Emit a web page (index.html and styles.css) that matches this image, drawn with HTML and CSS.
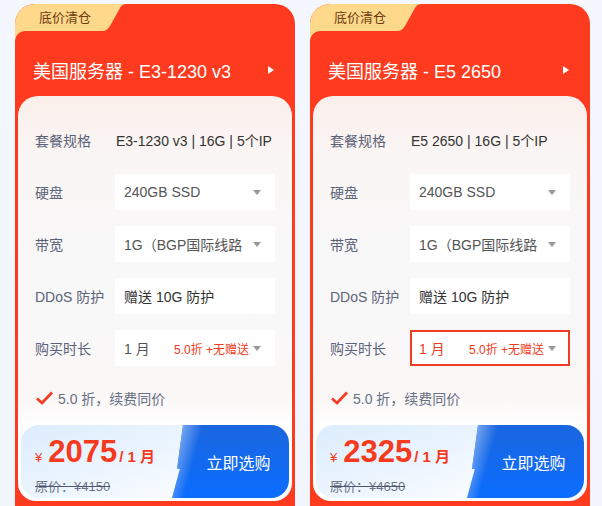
FILE: index.html
```html
<!DOCTYPE html>
<html lang="zh-CN">
<head>
  <meta charset="UTF-8">
  <meta name="viewport" content="width=device-width, initial-scale=1.0">
  <title>美国服务器</title>
  <link rel="stylesheet" href="styles.css">
</head>
<body>
  <div class="card">
    <div class="tag">
      <svg width="112" height="38" viewBox="0 0 112 38"><path d="M0 0 H112 C108 0 106 2 105 4 L95 22 C93 25 91 27 87 27 H10 A10 10 0 0 0 0 37 Z" fill="#fed88b"/></svg>
      <span class="tag-text">底价清仓</span>
    </div>
    <div class="card-head">
      <span class="title">美国服务器 - E3-1230 v3</span>
      <span class="head-arrow"></span>
    </div>
    <div class="panel">
      <div class="row">
        <span class="label">套餐规格</span>
        <span class="plain">E3-1230 v3 | 16G | 5个IP</span>
      </div>
      <div class="row">
        <span class="label">硬盘</span>
        <div class="select"><span class="val">240GB SSD</span><span class="caret"></span></div>
      </div>
      <div class="row">
        <span class="label">带宽</span>
        <div class="select"><span class="val">1G（BGP国际线路）</span><span class="caret"></span></div>
      </div>
      <div class="row">
        <span class="label">DDoS 防护</span>
        <div class="select"><span class="val dark">赠送 10G 防护</span></div>
      </div>
      <div class="row">
        <span class="label">购买时长</span>
        <div class="select"><span class="val fixed">1 月</span><span class="note">5.0折 +无赠送</span><span class="caret near"></span></div>
      </div>
      <div class="check">
        <svg width="17" height="14" viewBox="0 0 17 14"><path d="M1 7.5 L6 12 L16 1.5" fill="none" stroke="#f23d24" stroke-width="2.8" stroke-linejoin="round"/></svg>
        <span>5.0 折，续费同价</span>
      </div>
      <div class="buy">
        <div class="price-info">
          <div class="price"><span class="yen">¥</span><span class="num">2075</span><span class="per">/ 1 月</span></div>
          <div class="orig">原价：¥4150</div>
        </div>
        <div class="buy-btn">立即选购</div>
      </div>
    </div>
  </div>

  <div class="card">
    <div class="tag">
      <svg width="112" height="38" viewBox="0 0 112 38"><path d="M0 0 H112 C108 0 106 2 105 4 L95 22 C93 25 91 27 87 27 H10 A10 10 0 0 0 0 37 Z" fill="#fed88b"/></svg>
      <span class="tag-text">底价清仓</span>
    </div>
    <div class="card-head">
      <span class="title">美国服务器 - E5 2650</span>
      <span class="head-arrow"></span>
    </div>
    <div class="panel">
      <div class="row">
        <span class="label">套餐规格</span>
        <span class="plain">E5 2650 | 16G | 5个IP</span>
      </div>
      <div class="row">
        <span class="label">硬盘</span>
        <div class="select"><span class="val">240GB SSD</span><span class="caret"></span></div>
      </div>
      <div class="row">
        <span class="label">带宽</span>
        <div class="select"><span class="val">1G（BGP国际线路）</span><span class="caret"></span></div>
      </div>
      <div class="row">
        <span class="label">DDoS 防护</span>
        <div class="select"><span class="val dark">赠送 10G 防护</span></div>
      </div>
      <div class="row">
        <span class="label">购买时长</span>
        <div class="select active"><span class="val fixed">1 月</span><span class="note">5.0折 +无赠送</span><span class="caret near"></span></div>
      </div>
      <div class="check">
        <svg width="17" height="14" viewBox="0 0 17 14"><path d="M1 7.5 L6 12 L16 1.5" fill="none" stroke="#f23d24" stroke-width="2.8" stroke-linejoin="round"/></svg>
        <span>5.0 折，续费同价</span>
      </div>
      <div class="buy">
        <div class="price-info">
          <div class="price"><span class="yen">¥</span><span class="num">2325</span><span class="per">/ 1 月</span></div>
          <div class="orig">原价：¥4650</div>
        </div>
        <div class="buy-btn">立即选购</div>
      </div>
    </div>
  </div>
</body>
</html>
```

FILE: styles.css
```css
body {
  margin: 0;
  padding: 4px 0 0 15px;
  display: flex;
  gap: 15px;
  background: linear-gradient(180deg, #f4f7fd 0%, #f2f5fb 100%);
  font-family: 'Liberation Sans', 'Noto Sans CJK SC', sans-serif;
  height: 502px;
  overflow: hidden;
}

.card {
  position: relative;
  width: 280px;
  flex: none;
  background: #fe3a1f;
  border-radius: 20px 20px 0 0;
  overflow: hidden;
  padding-bottom: 8px;
}

.tag {
  position: absolute;
  left: 0;
  top: 0;
  width: 112px;
  height: 38px;
}

.tag svg {
  display: block;
}

.tag-text {
  position: absolute;
  left: 24px;
  top: 5px;
  line-height: 18px;
  font-size: 13px;
  color: #6b3a10;
}

.card-head {
  height: 52px;
  padding: 40px 21px 0 18px;
  display: flex;
  align-items: center;
  justify-content: space-between;
}

.title {
  color: #fff;
  font-size: 18px;
}

.head-arrow {
  width: 0;
  height: 0;
  border-top: 4.5px solid transparent;
  border-bottom: 4.5px solid transparent;
  border-left: 6px solid #fff;
}

.panel {
  margin: 0 3px;
  height: 405px;
  box-sizing: border-box;
  padding: 26px 0 3px;
  border-radius: 20px 20px 18px 18px;
  background: linear-gradient(180deg, #fbefeb 0%, #faf6f5 60px, #f8f8f9 180px, #faf7f6 300px, #fff 330px);
  display: flex;
  flex-direction: column;
}

.row {
  display: flex;
  align-items: center;
  height: 36px;
  padding: 0 17px 0 17px;
  margin-bottom: 16px;
  font-size: 14px;
}

.label {
  width: 80px;
  flex: none;
  color: #5b6378;
}

.plain {
  color: #333;
  padding-left: 1px;
}

.select {
  flex: 1;
  height: 36px;
  box-sizing: border-box;
  background: #fff;
  display: flex;
  align-items: center;
  padding: 0 14px 0 9px;
  min-width: 0;
}

.select.active {
  border: 2px solid #f03c22;
  padding: 0 12px 0 7px;
}

.val {
  flex: 1;
  color: #555;
  white-space: nowrap;
  overflow: hidden;
}

.val.dark {
  color: #333;
}

.val.fixed {
  flex: none;
}

.active .val {
  color: #f03c22;
}

.note {
  margin-left: auto;
  font-size: 12px;
  color: #f03c22;
}

.caret {
  flex: none;
  margin-left: 11px;
  width: 0;
  height: 0;
  border-left: 4.5px solid transparent;
  border-right: 4.5px solid transparent;
  border-top: 5px solid #999;
}

.caret.near {
  margin-left: 4px;
}

.check {
  display: flex;
  align-items: center;
  height: 20px;
  margin-top: 6px;
  padding-left: 18px;
  gap: 5px;
  font-size: 14px;
  color: #687085;
}

.check svg {
  display: block;
}

.buy {
  margin: auto 3px 0;
  height: 73px;
  flex: none;
  display: flex;
  border-radius: 18px;
  overflow: hidden;
  background: linear-gradient(160deg, #ddedfd 0%, #eaf4fe 40%, #fbfdff 80%);
}

.price-info {
  flex: 1;
  padding: 10px 0 0 14px;
}

.price {
  line-height: 34px;
  color: #f53a20;
  font-weight: bold;
  white-space: nowrap;
}

.yen {
  font-size: 13px;
  font-weight: normal;
  margin-right: 6px;
}

.num {
  font-size: 31px;
}

.per {
  font-size: 15px;
  margin-left: 2px;
}

.orig {
  margin-top: 4px;
  line-height: 16px;
  font-size: 13px;
  color: #6c7387;
  text-decoration: line-through;
  text-decoration-color: #4d566c;
}

.buy-btn {
  width: 101px;
  flex: none;
  padding-left: 16px;
  display: flex;
  align-items: center;
  justify-content: center;
  color: #fff;
  font-size: 16px;
  clip-path: polygon(11px 0, 100% 0, 100% 100%, 0 100%, 8px 60%, 5px 60%);
  background:
    linear-gradient(105deg, rgba(205, 224, 251, 0.95) 0, rgba(130, 175, 242, 0.8) 12px, rgba(40, 110, 235, 0) 30px),
    linear-gradient(180deg, #1b66df 0%, #0b6dff 100%);
}
```
